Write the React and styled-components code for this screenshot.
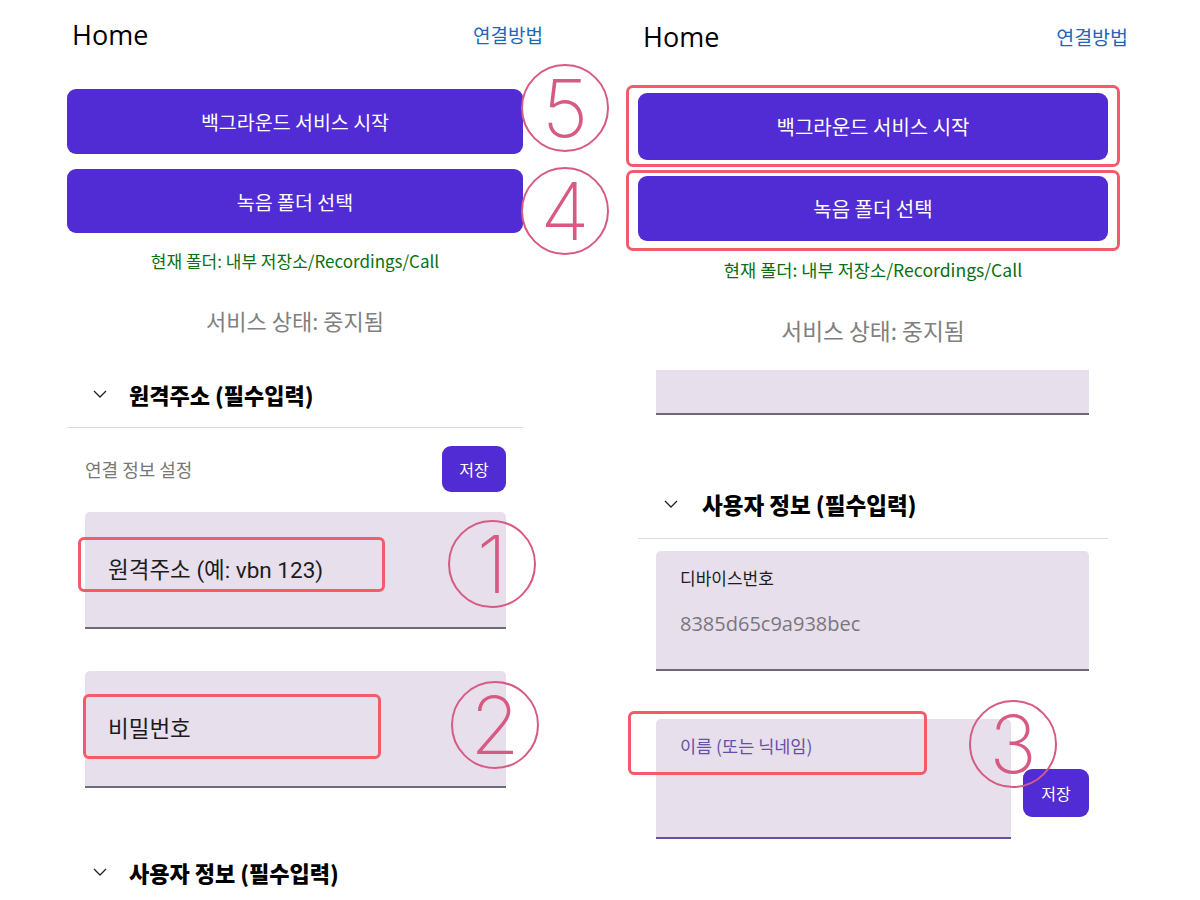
import styled, { createGlobalStyle } from "styled-components"

const GlobalStyle = createGlobalStyle`
  html, body {
    margin: 0;
    padding: 0;
    background: #ffffff;
  }
  body {
    font-family: "Noto Sans CJK KR", "Noto Sans", sans-serif;
    color: #1c1b1f;
  }
`

const PURPLE = "#512bd4"
const MARK_RED = "#f25b69"
const CALLOUT_PINK = "#d75a82"

const Page = styled.div`
  display: flex;
  width: 1200px;
  height: 900px;
  overflow: hidden;
  background: #ffffff;
`

const Phone = styled.div`
  display: flex;
  flex-direction: column;
  width: ${(p) => p.$width}px;
  margin-left: ${(p) => p.$offset}px;
  flex-shrink: 0;
`

const Header = styled.div`
  display: flex;
  align-items: center;
  justify-content: space-between;
  height: ${(p) => p.$height}px;
  margin: 0 -20px 0 5px;
`

const HomeTitle = styled.div`
  font-family: "Open Sans", "Noto Sans", sans-serif;
  font-size: 27px;
  color: #000000;
`

const HelpLink = styled.a`
  font-size: ${(p) => p.$size || 19}px;
  color: #2167b7;
  text-decoration: none;
`

const Anchor = styled.div`
  position: relative;
  margin-top: ${(p) => p.$top || 0}px;
`

const ActionButton = styled.button`
  display: block;
  width: 100%;
  height: ${(p) => p.$height || 65}px;
  border: none;
  border-radius: 9px;
  background: ${PURPLE};
  color: #ffffff;
  font-family: "Noto Sans CJK KR", sans-serif;
  font-size: ${(p) => p.$size || 19.5}px;
`

const Highlight = styled.div`
  border: 3px solid ${MARK_RED};
  border-radius: 7px;
  margin: ${(p) => p.$top}px -12px 0;
  padding: ${(p) => p.$pad};
`

const Marker = styled.div`
  position: absolute;
  left: ${(p) => p.$x}px;
  top: ${(p) => p.$y}px;
  width: ${(p) => p.$w}px;
  height: ${(p) => p.$h}px;
  border: 3px solid ${MARK_RED};
  border-radius: 6px;
  box-sizing: border-box;
  pointer-events: none;
`

const Callout = styled.div`
  position: absolute;
  left: ${(p) => p.$x}px;
  top: ${(p) => p.$y}px;
  width: 88px;
  height: 88px;
  box-sizing: border-box;
  border: 2.5px solid ${CALLOUT_PINK};
  border-radius: 50%;
  display: flex;
  align-items: center;
  justify-content: center;
  font-family: "Inter", "Liberation Sans", sans-serif;
  font-weight: 200;
  font-size: 80px;
  line-height: 1;
  color: ${CALLOUT_PINK};
  pointer-events: none;
  z-index: 2;
`

const FolderNote = styled.div`
  margin-top: ${(p) => p.$top}px;
  text-align: center;
  font-size: ${(p) => p.$size}px;
  line-height: 22px;
  color: #0b6f12;
`

const StatusText = styled.div`
  margin-top: ${(p) => p.$top}px;
  text-align: center;
  font-size: ${(p) => p.$size}px;
  line-height: 28px;
  color: #808080;
`

const ExpanderHeader = styled.div`
  display: flex;
  align-items: center;
  height: 40px;
  margin-top: ${(p) => p.$top}px;
  padding-left: 26px;
`

const ChevronBox = styled.span`
  display: flex;
  width: 14px;
  margin-right: ${(p) => p.$gap || 22}px;
`

const SectionTitle = styled.div`
  font-size: ${(p) => p.$size}px;
  font-weight: 800;
  color: #000000;
`

const Divider = styled.div`
  height: 1px;
  background: #dcdcdc;
  margin-top: ${(p) => p.$top}px;
`

const SectionBody = styled.div`
  display: flex;
  flex-direction: column;
  padding: 0 ${(p) => p.$right}px 0 18px;
`

const ConfigRow = styled.div`
  display: flex;
  align-items: center;
  justify-content: space-between;
  margin-top: 18px;
`

const ConfigLabel = styled.div`
  font-size: 18px;
  color: #777777;
`

const SaveButton = styled.button`
  width: ${(p) => p.$w || 64}px;
  height: ${(p) => p.$h || 46}px;
  flex-shrink: 0;
  border: none;
  border-radius: 9px;
  background: ${PURPLE};
  color: #ffffff;
  font-family: "Noto Sans CJK KR", sans-serif;
  font-size: 16px;
  margin-bottom: ${(p) => p.$bottom || 0}px;
`

const Field = styled.div`
  position: relative;
  flex: ${(p) => (p.$grow ? 1 : "none")};
  height: ${(p) => p.$height || 117}px;
  box-sizing: border-box;
  margin-top: ${(p) => p.$top || 0}px;
  background: #e7e0ec;
  border-radius: ${(p) => (p.$clipped ? "0" : "5px 5px 0 0")};
  border-bottom: 2px solid ${(p) => (p.$focused ? "#6750a4" : "#6f6a73")};
  display: flex;
  flex-direction: column;
  justify-content: ${(p) => (p.$centered ? "center" : "flex-start")};
  padding: ${(p) => (p.$centered ? "0 0 0 23px" : "16px 0 0 24px")};
`

const FieldPlaceholder = styled.div`
  font-family: "Roboto", "Noto Sans CJK KR", sans-serif;
  font-size: 22.5px;
  line-height: 28px;
  color: #1d1b20;
`

const FieldLabel = styled.div`
  font-size: ${(p) => (p.$active ? 17.5 : 17)}px;
  line-height: 22px;
  color: ${(p) => (p.$active ? "#6750a4" : "#1d1b20")};
`

const FieldValue = styled.div`
  margin-top: 21px;
  font-family: "Open Sans", "Noto Sans", sans-serif;
  font-size: 20px;
  line-height: 28px;
  color: #7a767e;
`

const NameRow = styled.div`
  display: flex;
  align-items: flex-end;
  gap: 12px;
  margin-top: 48px;
`

const Chevron = () => (
  <svg width="14" height="8" viewBox="0 0 14 8" fill="none">
    <polyline points="1,1 7,7 13,1" stroke="#222" strokeWidth="1.3" />
  </svg>
)

const Expander = ({ top, title, gap, size }) => (
  <ExpanderHeader $top={top}>
    <ChevronBox $gap={gap}>
      <Chevron />
    </ChevronBox>
    <SectionTitle $size={size}>{title}</SectionTitle>
  </ExpanderHeader>
)

const LeftPhone = () => (
  <Phone $width={456} $offset={67}>
    <Header $height={68}>
      <HomeTitle>Home</HomeTitle>
      <HelpLink>연결방법</HelpLink>
    </Header>
    <Anchor $top={21}>
      <ActionButton>백그라운드 서비스 시작</ActionButton>
      <Callout $x={454} $y={-25}>5</Callout>
    </Anchor>
    <Anchor $top={15}>
      <ActionButton $height={64}>녹음 폴더 선택</ActionButton>
      <Callout $x={454} $y={-2}>4</Callout>
    </Anchor>
    <FolderNote $top={17} $size={17}>현재 폴더: 내부 저장소/Recordings/Call</FolderNote>
    <StatusText $top={34} $size={22}>서비스 상태: 중지됨</StatusText>
    <Expander top={40} size={22} title="원격주소 (필수입력)" />
    <Divider $top={13} />
    <SectionBody $right={17}>
      <ConfigRow>
        <ConfigLabel>연결 정보 설정</ConfigLabel>
        <SaveButton>저장</SaveButton>
      </ConfigRow>
      <Field $top={20} $centered>
        <FieldPlaceholder>원격주소 (예: vbn 123)</FieldPlaceholder>
        <Marker $x={-7} $y={25} $w={307} $h={55} />
        <Callout $x={363} $y={8}>1</Callout>
      </Field>
      <Field $top={42} $centered>
        <FieldPlaceholder>비밀번호</FieldPlaceholder>
        <Marker $x={-2} $y={23} $w={298} $h={65} />
        <Callout $x={366} $y={10}>2</Callout>
      </Field>
    </SectionBody>
    <Expander top={64} size={22} title="사용자 정보 (필수입력)" />
  </Phone>
)

const RightPhone = () => (
  <Phone $width={470} $offset={115}>
    <Header $height={72}>
      <HomeTitle>Home</HomeTitle>
      <HelpLink $size={19.5}>연결방법</HelpLink>
    </Header>
    <Highlight $top={13} $pad="5px 9px 4px">
      <ActionButton $height={67} $size={20}>백그라운드 서비스 시작</ActionButton>
    </Highlight>
    <Highlight $top={3} $pad="3px 9px 7px">
      <ActionButton $size={20}>녹음 폴더 선택</ActionButton>
    </Highlight>
    <FolderNote $top={8} $size={17.6}>현재 폴더: 내부 저장소/Recordings/Call</FolderNote>
    <StatusText $top={36} $size={22.7}>서비스 상태: 중지됨</StatusText>
    <SectionBody $right={19}>
      <Field $top={25} $height={45} $clipped />
    </SectionBody>
    <Expander top={69} size={22.5} title="사용자 정보 (필수입력)" gap={24} />
    <Divider $top={14} />
    <SectionBody $right={19}>
      <Field $top={12} $height={120}>
        <FieldLabel>디바이스번호</FieldLabel>
        <FieldValue>8385d65c9a938bec</FieldValue>
      </Field>
      <NameRow>
        <Field $grow $height={120} $focused>
          <FieldLabel $active>이름 (또는 닉네임)</FieldLabel>
          <Marker $x={-28} $y={-8} $w={299} $h={64} />
          <Callout $x={313} $y={-19}>3</Callout>
        </Field>
        <SaveButton $w={66} $h={48} $bottom={22}>저장</SaveButton>
      </NameRow>
    </SectionBody>
  </Phone>
)

export default function App() {
  return (
    <>
      <GlobalStyle />
      <Page>
        <LeftPhone />
        <RightPhone />
      </Page>
    </>
  )
}
